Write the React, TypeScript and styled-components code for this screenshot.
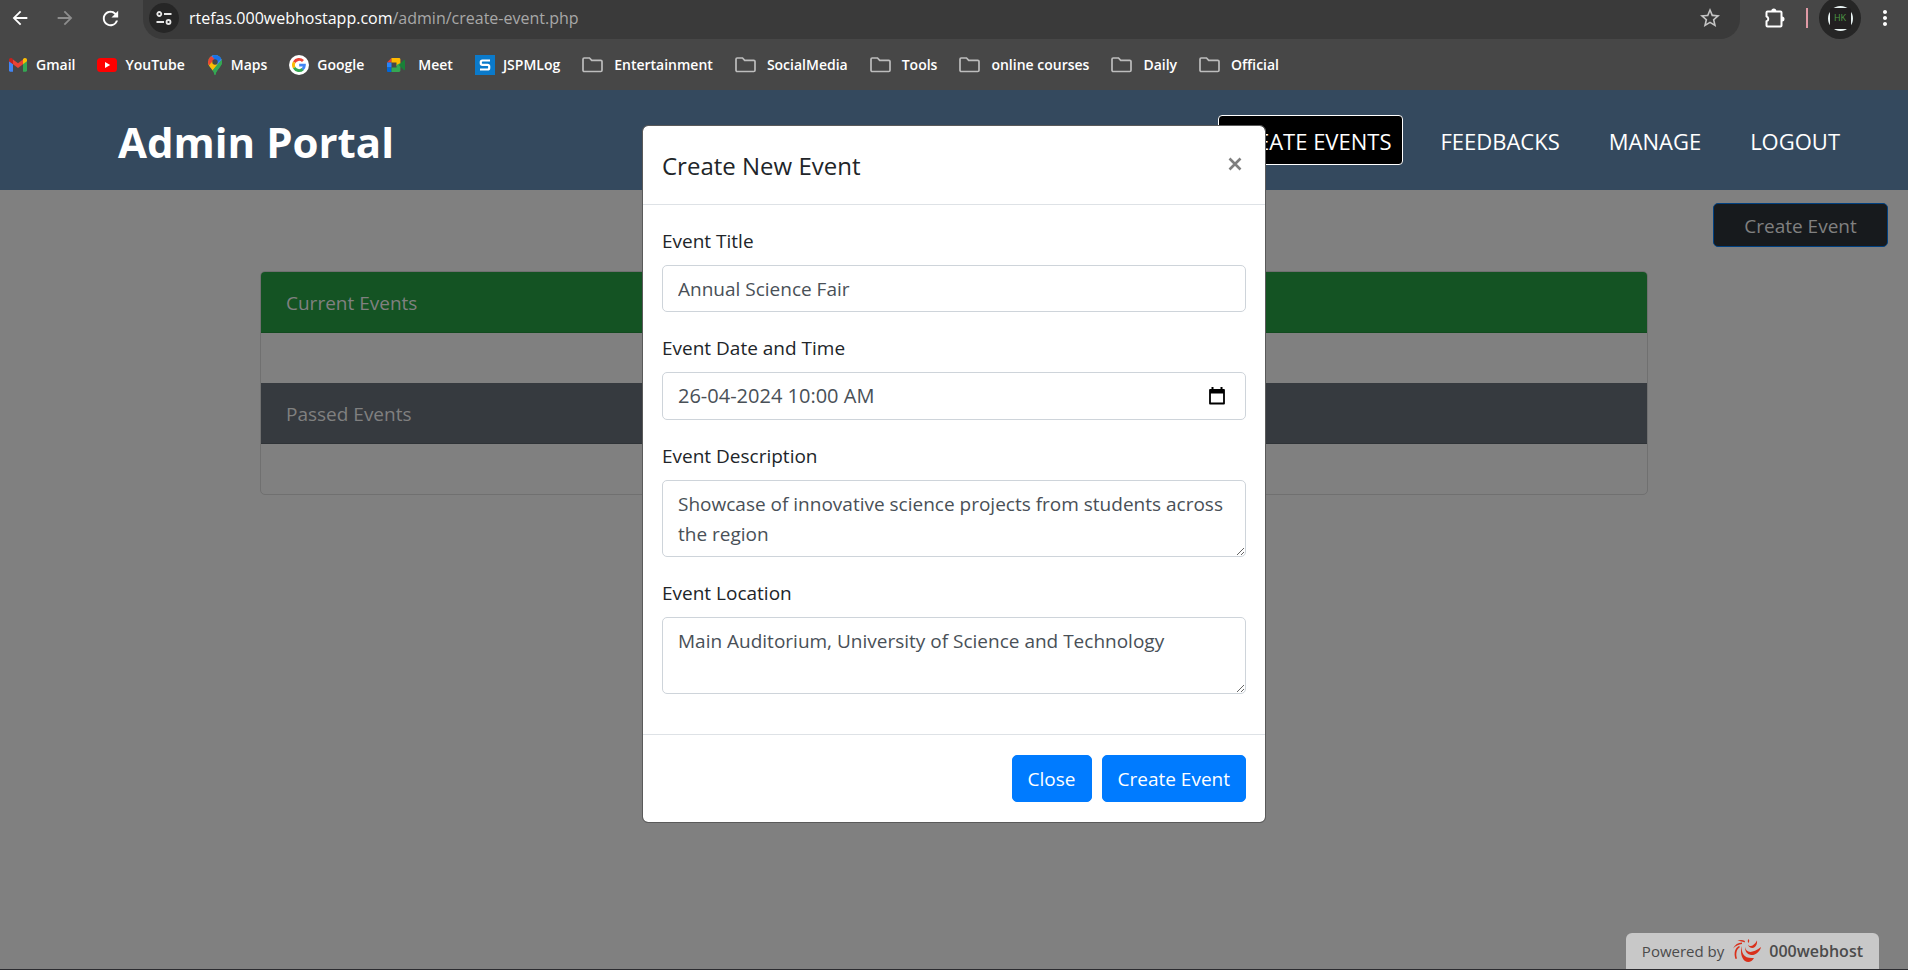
import React from 'react';
import styled, { createGlobalStyle, css } from 'styled-components';
import { MdArrowBack, MdArrowForward, MdRefresh, MdStarOutline, MdMoreVert } from 'react-icons/md';

const GlobalStyle = createGlobalStyle`
  *, *::before, *::after { box-sizing: border-box; }
  body {
    margin: 0;
    background: #808080;
    color: #212529;
    font-family: "Segoe UI", "Open Sans", "Noto Sans", sans-serif;
    font-size: 19px;
    line-height: 30px;
  }
  button, input, textarea { font: inherit; }
`;

const Screen = styled.div`
  display: flex;
  flex-direction: column;
  min-height: 100vh;
  overflow: hidden;
`;

/* ---------- Browser chrome ---------- */

const Chrome = styled.div`
  display: flex;
  flex-direction: column;
  height: 90px;
  background: #474747;
  color: #fff;
`;

const Toolbar = styled.div`
  display: flex;
  align-items: center;
  height: 39px;
`;

const NavTools = styled.div`
  display: flex;
  gap: 23px;
  width: 143px;
  padding: 0 0 3px 9px;
`;

const ToolButton = styled.button<{ $muted?: boolean }>`
  display: flex;
  padding: 0;
  border: 0;
  background: none;
  color: ${(p) => (p.$muted ? '#8d8d8d' : '#fff')};
`;

const Omnibox = styled.div`
  display: flex;
  flex: 1;
  align-items: center;
  height: 39px;
  padding: 0 18px 3px 6px;
  border-radius: 0 0 20px 20px;
  background: #3a3a3a;
`;

const SiteInfo = styled.button`
  display: flex;
  align-items: center;
  justify-content: center;
  width: 30px;
  height: 30px;
  padding: 0;
  border: 0;
  border-radius: 50%;
  background: #262626;
`;

const Address = styled.div`
  flex: 1;
  padding-left: 10px;
  font-size: 16px;
  color: #a8a8a8;
`;

const Host = styled.span`
  color: #fff;
`;

const RightTools = styled.div`
  display: flex;
  align-items: center;
  padding: 0 11px 3px 24px;
`;

const Divider = styled.span`
  width: 2px;
  height: 20px;
  margin: 0 11px 0 20px;
  background: #e09aa5;
`;

const Avatar = styled.button`
  display: flex;
  align-items: center;
  justify-content: center;
  width: 42px;
  height: 42px;
  margin-right: 12px;
  padding: 0;
  border: 0;
  border-radius: 50%;
  background: #262626;
`;

const AvatarRing = styled.span`
  display: flex;
  align-items: center;
  justify-content: center;
  width: 25px;
  height: 25px;
  border-radius: 50%;
  background: #e8f2f2;
`;

const AvatarFace = styled.span`
  display: flex;
  flex-shrink: 0;
  align-items: center;
  justify-content: center;
  width: 21px;
  height: 21px;
  border-radius: 2px;
  background: #211f20;
  color: #4f9a45;
  font-size: 9px;
  line-height: 12px;
`;

const Bookmarks = styled.nav`
  display: flex;
  align-items: center;
  gap: 22px;
  height: 51px;
  padding-left: 8px;
`;

const Bookmark = styled.a<{ $folder?: boolean }>`
  display: flex;
  align-items: center;
  gap: ${(p) => (p.$folder ? 11 : 8)}px;
  color: #fff;
  font-size: 14px;
  font-weight: 600;
  line-height: 20px;
  text-decoration: none;
  white-space: nowrap;
`;

/* ---------- Page ---------- */

const Page = styled.div`
  position: relative;
  display: flex;
  flex: 1;
  flex-direction: column;
  border-bottom: 1px solid #2b2b2f;
`;

const Header = styled.header`
  display: flex;
  align-items: center;
  justify-content: space-between;
  height: 100px;
  padding: 0 56px 0 118px;
  background: #34495e;
  color: #fff;
`;

const Brand = styled.h1`
  margin: 0;
  padding-top: 4px;
  font-size: 42px;
  font-weight: 700;
  line-height: 50px;
`;

const Menu = styled.nav`
  display: flex;
  gap: 25px;
`;

const MenuLink = styled.a<{ $active?: boolean }>`
  height: 50px;
  padding: 0 11px;
  border: 1px solid transparent;
  border-radius: 4px;
  color: #fff;
  font-size: 22px;
  line-height: 50px;
  text-decoration: none;
  ${(p) =>
    p.$active &&
    css`
      border-color: #fff;
      background: #000;
    `}
`;

const Actions = styled.div`
  display: flex;
  justify-content: flex-end;
  padding: 13px 20px 24px;
`;

const OpenButton = styled.button`
  width: 175px;
  height: 44px;
  padding: 1px 0 0;
  border: 1px solid #004080;
  border-radius: 5px;
  background: #171a1d;
  color: #808080;
`;

const Content = styled.main`
  width: 100%;
  max-width: 1428px;
  margin: 0 auto;
  padding: 0 20px;
`;

const Card = styled.section`
  overflow: hidden;
  border: 1px solid #707070;
  border-radius: 5px;
`;

const CardHeader = styled.h2<{ $tone: 'success' | 'secondary' }>`
  height: 61px;
  margin: 0;
  padding: 16px 25px 14px;
  border-bottom: 1px solid ${(p) => (p.$tone === 'success' ? '#124a1f' : '#2f3337')};
  background: ${(p) => (p.$tone === 'success' ? '#145323' : '#363a3f')};
  color: #808080;
  font-size: 19px;
  font-weight: 400;
`;

const CardBody = styled.div`
  height: 50px;
`;

/* ---------- Dialog ---------- */

const DialogLayer = styled.div`
  position: absolute;
  inset: 0;
  display: flex;
  align-items: flex-start;
  justify-content: center;
  padding: 35px 10px;
`;

const Dialog = styled.div`
  width: 100%;
  max-width: 624px;
  border: 1px solid #5a5a5a;
  border-radius: 6px;
  background: #fff;
  background-clip: padding-box;
`;

const DialogHeader = styled.div`
  display: flex;
  align-items: flex-start;
  justify-content: space-between;
  padding: 21px 21px 19px 19px;
  border-bottom: 1px solid #dee2e6;
`;

const DialogTitle = styled.h5`
  margin: 0;
  font-size: 24px;
  font-weight: 500;
  line-height: 38px;
`;

const CloseIcon = styled.button`
  display: flex;
  padding: 10px 2px;
  border: 0;
  background: none;
  color: #7f7f7f;
`;

const DialogBody = styled.form`
  display: flex;
  flex-direction: column;
  gap: 20px;
  padding: 20px 19px 40px;
`;

const Field = styled.div`
  display: flex;
  flex-direction: column;
  gap: 9px;
  padding-top: 1px;
`;

const Label = styled.label`
  color: #212529;
`;

const control = css`
  width: 100%;
  border: 1px solid #ced4da;
  border-radius: 5px;
  background: #fff;
  color: #495057;
`;

const TextInput = styled.input`
  ${control}
  height: 47px;
  padding: 1px 15px 0;
`;

const DateControl = styled.div`
  ${control}
  display: flex;
  align-items: center;
  height: 48px;
  padding: 0 20px 0 15px;
`;

const DateInput = styled.input`
  flex: 1;
  min-width: 0;
  padding: 0;
  border: 0;
  outline: 0;
  background: none;
  color: inherit;
  font-size: 20px;
`;

const PickerButton = styled.button`
  display: flex;
  padding: 0;
  border: 0;
  background: none;
`;

const TextArea = styled.textarea`
  ${control}
  display: block;
  height: 77px;
  padding: 8px 15px 7px;
  resize: vertical;
`;

const DialogFooter = styled.div`
  display: flex;
  justify-content: flex-end;
  gap: 10px;
  padding: 20px 19px;
  border-top: 1px solid #dee2e6;
`;

const PrimaryButton = styled.button`
  height: 47px;
  padding: 0 15px;
  border: 1px solid #007bff;
  border-radius: 5px;
  background: #007bff;
  color: #fff;
  font-weight: 500;
`;

/* ---------- Hosting badge ---------- */

const HostBadge = styled.a`
  position: absolute;
  right: 29px;
  bottom: 0;
  display: flex;
  align-items: center;
  gap: 9px;
  height: 36px;
  padding: 0 16px;
  border-radius: 6px 6px 0 0;
  background: #c8c8c8;
  color: #4b4b4b;
  font-size: 15px;
  line-height: 20px;
  text-decoration: none;
`;

const HostName = styled.span`
  margin-left: -2px;
  font-size: 16px;
  font-weight: 600;
`;

/* ---------- Icons ---------- */

const GmailIcon = () => (
  <svg width="20" height="20" viewBox="0 0 20 20" aria-hidden="true">
    <path d="M1 6v9.6c0 .7.5 1.2 1.2 1.2H5V8.9L1 6z" fill="#4285f4" />
    <path d="M15 8.9v7.9h2.8c.7 0 1.2-.5 1.2-1.2V6l-4 2.900z" fill="#34a853" />
    <path d="M15 4.6v4.600l4-3V4.800c0-1.600-1.800-2.400-3-1.500l-1 .8z" fill="#fbbc04" />
    <path d="M5 9.2V4.400l5 3.800 5-3.800v4.800L10 13 5 9.200z" fill="#ea4335" />
    <path d="M1 4.8v1.400l4 3V4.200L4 3.300C2.800 2.400 1 3.200 1 4.800z" fill="#c5221f" />
  </svg>
);

const YouTubeIcon = () => (
  <svg width="20" height="20" viewBox="0 0 20 20" aria-hidden="true">
    <rect x="0" y="3" width="20" height="14" rx="3.500" fill="#f00" />
    <path d="M8 7l5.200 3L8 13z" fill="#fff" />
  </svg>
);

const MapsIcon = () => (
  <svg width="16" height="22" viewBox="0 0 16 22" aria-hidden="true">
    <clipPath id="pin">
      <path d="M8 1a7 7 0 0 0-7 7c0 2.800 1.600 4.600 3.200 6.600C5.800 16.700 7 18.400 7.300 20.400c.2.900 1.200.9 1.400 0 .3-2 1.500-3.700 3.100-5.800C13.400 12.600 15 10.800 15 8a7 7 0 0 0-7-7z" />
    </clipPath>
    <g clipPath="url(#pin)">
      <rect width="16" height="22" fill="#34a853" />
      <path d="M0 22V8l4-2 4 2 7-3-9 11z" fill="#fbbc04" />
      <path d="M3 0h13v5l-6 6-4-5z" fill="#4285f4" />
      <path d="M5 0h8l2 4-5 5-3-3z" fill="#1a73e8" />
      <path d="M0 2l3-1 4.500 4L1.500 12 0 9z" fill="#ea4335" />
      <path d="M11 10l5-6v5l-8 11-2-4z" fill="#34a853" />
    </g>
    <circle cx="8" cy="8" r="2.700" fill="#474747" />
  </svg>
);

const GoogleIcon = () => (
  <svg width="20" height="20" viewBox="0 0 20 20" aria-hidden="true">
    <circle cx="10" cy="10" r="10" fill="#fff" />
    <g fill="none" strokeWidth="2.800">
      <path d="M5.200 7.200A5.600 5.600 0 0 1 14 6.100" stroke="#ea4335" />
      <path d="M5.200 12.800a5.600 5.600 0 0 1 0-5.600" stroke="#fbbc05" />
      <path d="M13.800 14.100a5.600 5.600 0 0 1-8.600-1.300" stroke="#34a853" />
      <path d="M10.200 10.200h5.200a5.600 5.600 0 0 1-1.800 4" stroke="#4285f4" />
    </g>
  </svg>
);

const MeetIcon = () => (
  <svg width="24" height="20" viewBox="0 0 24 20" aria-hidden="true">
    <path d="M1 7.500L5.500 3v4.500z" fill="#ea4335" />
    <path d="M1 7.500h4.500v5H1z" fill="#2684fc" />
    <path d="M1 12.500h4.500V17H2.300c-.8 0-1.300-.5-1.300-1.300z" fill="#0066da" />
    <path d="M5.500 3H13c.8 0 1.400.6 1.400 1.400v4.600L10.500 11V7.500h-5z" fill="#ffba00" />
    <path d="M5.500 12.500h5V10l3.900-2v7.600c0 .8-.6 1.400-1.400 1.400H5.500z" fill="#34a853" />
    <path d="M13 10l4.800-5c.6-.6 1.200-.2 1.200.5v9c0 .7-.6 1.100-1.200.5z" fill="#188038" />
  </svg>
);

const SIcon = () => (
  <svg width="20" height="20" viewBox="0 0 20 20" aria-hidden="true">
    <rect width="20" height="20" fill="#0a7acb" />
    <path
      d="M15 5.500H7.400c-1 0-1.600.6-1.600 1.500v1.300c0 1 .6 1.500 1.600 1.500h5.200c1 0 1.600.6 1.600 1.500v1.700c0 1-.6 1.500-1.600 1.500H5"
      fill="none"
      stroke="#fff"
      strokeWidth="2.200"
    />
  </svg>
);

const FolderIcon = () => (
  <svg width="21" height="20" viewBox="0 0 21 20" aria-hidden="true">
    <path
      d="M1 4.200C1 3.500 1.500 3 2.200 3h5.300l2.200 2.400h9.100c.7 0 1.200.5 1.200 1.200v8.700c0 .7-.5 1.200-1.200 1.200H2.200c-.7 0-1.200-.5-1.200-1.200z"
      fill="none"
      stroke="#bdbdbd"
      strokeWidth="1.700"
    />
  </svg>
);

const TuneIcon = () => (
  <svg width="16" height="16" viewBox="0 0 16 16" fill="none" stroke="#e8e8e8" strokeWidth="1.800" aria-hidden="true">
    <circle cx="3.300" cy="4" r="2" />
    <path d="M8 4h7.500M.5 12H8" />
    <circle cx="12.500" cy="12" r="2" />
  </svg>
);

const PuzzleIcon = () => (
  <svg width="22" height="22" viewBox="0 0 22 22" aria-hidden="true">
    <path
      d="M3.500 4.500h13c.6 0 1 .4 1 1v13c0 .6-.4 1-1 1h-13c-.6 0-1-.4-1-1v-4.200a2.500 2.500 0 0 0 0-4.800V5.500c0-.6.4-1 1-1z"
      fill="none"
      stroke="#fff"
      strokeWidth="2"
      strokeLinejoin="round"
    />
    <path d="M7.300 4a2.500 2.500 0 0 1 5 0zM18 9.500a2.500 2.500 0 0 1 0 5z" fill="#fff" />
  </svg>
);

const CrossIcon = () => (
  <svg width="14" height="14" viewBox="0 0 14 14" aria-hidden="true">
    <path d="M1.500 1.500l11 11m0-11l-11 11" stroke="currentColor" strokeWidth="2.600" />
  </svg>
);

const CalendarIcon = () => (
  <svg width="16" height="18" viewBox="0 0 16 18" aria-hidden="true">
    <path d="M1 3h14v13.500H1z" fill="none" stroke="#000" strokeWidth="1.800" strokeLinejoin="round" />
    <path d="M1 2.500h14v4H1zM2.500 0h2v3h-2zM11.500 0h2v3h-2z" fill="#000" />
  </svg>
);

const SwirlIcon = () => (
  <svg width="29" height="26" viewBox="0 0 29 26" fill="#d9301a" aria-hidden="true">
    <path d="M9 8C8 15 11 21 21 20c-2 4-6 5-9 3-4-3-5-10-3-15z" />
    <path d="M12 9c1 6 7 7 16 0-1 5-6 8.500-10 8-4.500-1-6-4-6-8z" />
    <path d="M15 6.500c2 3 6 1.500 9-4 .5 3.500-1.500 7.500-4.500 7.500-2.500 0-4-1.500-4.500-3.500z" />
    <path d="M15.500 1c1.200 1.200.8 3 0 4-.9-.8-1-2.700 0-4z" />
    <path d="M6 8C2 10 .5 15 2.500 21l1.500-.5C2.500 16 3.500 11 7 9zM9 4.500C5 4.500 2 6.500 0 10.500 2.500 8 5.500 6.500 9 6zM12 3C9 1.500 7 1.500 4.500 3c3 0 5 .5 7 1.500z" />
  </svg>
);

const BOOKMARKS: { name: string; icon?: React.ReactNode }[] = [
  { name: 'Gmail', icon: <GmailIcon /> },
  { name: 'YouTube', icon: <YouTubeIcon /> },
  { name: 'Maps', icon: <MapsIcon /> },
  { name: 'Google', icon: <GoogleIcon /> },
  { name: 'Meet', icon: <MeetIcon /> },
  { name: 'JSPMLog', icon: <SIcon /> },
  { name: 'Entertainment' },
  { name: 'SocialMedia' },
  { name: 'Tools' },
  { name: 'online courses' },
  { name: 'Daily' },
  { name: 'Official' },
];

const MENU = ['CREATE EVENTS', 'FEEDBACKS', 'MANAGE', 'LOGOUT'];

export default function App() {
  return (
    <Screen>
      <GlobalStyle />
      <Chrome>
        <Toolbar>
          <NavTools>
            <ToolButton aria-label="Back"><MdArrowBack size={22} /></ToolButton>
            <ToolButton aria-label="Forward" $muted><MdArrowForward size={22} /></ToolButton>
            <ToolButton aria-label="Reload"><MdRefresh size={23} /></ToolButton>
          </NavTools>
          <Omnibox>
            <SiteInfo aria-label="Site information"><TuneIcon /></SiteInfo>
            <Address><Host>rtefas.000webhostapp.com</Host>/admin/create-event.php</Address>
            <ToolButton aria-label="Bookmark this page" $muted><MdStarOutline size={24} color="#c4c4c4" /></ToolButton>
          </Omnibox>
          <RightTools>
            <ToolButton aria-label="Extensions"><PuzzleIcon /></ToolButton>
            <Divider />
            <Avatar aria-label="Profile"><AvatarRing><AvatarFace>HK</AvatarFace></AvatarRing></Avatar>
            <ToolButton aria-label="Browser menu"><MdMoreVert size={24} /></ToolButton>
          </RightTools>
        </Toolbar>
        <Bookmarks aria-label="Bookmarks">
          {BOOKMARKS.map((b) => (
            <Bookmark href="#" key={b.name} $folder={!b.icon}>{b.icon ?? <FolderIcon />}{b.name}</Bookmark>
          ))}
        </Bookmarks>
      </Chrome>

      <Page>
        <Header>
          <Brand>Admin Portal</Brand>
          <Menu>
            {MENU.map((item, i) => (
              <MenuLink href="#" key={item} $active={i === 0}>{item}</MenuLink>
            ))}
          </Menu>
        </Header>
        <Actions><OpenButton>Create Event</OpenButton></Actions>
        <Content>
          <Card>
            <CardHeader $tone="success">Current Events</CardHeader>
            <CardBody />
            <CardHeader $tone="secondary">Passed Events</CardHeader>
            <CardBody />
          </Card>
        </Content>

        <DialogLayer>
          <Dialog role="dialog" aria-labelledby="dialog-title">
            <DialogHeader>
              <DialogTitle id="dialog-title">Create New Event</DialogTitle>
              <CloseIcon aria-label="Close dialog"><CrossIcon /></CloseIcon>
            </DialogHeader>
            <DialogBody id="event-form">
              <Field>
                <Label htmlFor="title">Event Title</Label>
                <TextInput id="title" defaultValue="Annual Science Fair" />
              </Field>
              <Field>
                <Label htmlFor="date">Event Date and Time</Label>
                <DateControl>
                  <DateInput id="date" defaultValue="26-04-2024 10:00 AM" />
                  <PickerButton type="button" aria-label="Pick a date"><CalendarIcon /></PickerButton>
                </DateControl>
              </Field>
              <Field>
                <Label htmlFor="description">Event Description</Label>
                <TextArea
                  id="description"
                  defaultValue="Showcase of innovative science projects from students across the region"
                />
              </Field>
              <Field>
                <Label htmlFor="location">Event Location</Label>
                <TextArea id="location" defaultValue="Main Auditorium, University of Science and Technology" />
              </Field>
            </DialogBody>
            <DialogFooter>
              <PrimaryButton type="button">Close</PrimaryButton>
              <PrimaryButton type="submit" form="event-form">Create Event</PrimaryButton>
            </DialogFooter>
          </Dialog>
        </DialogLayer>

        <HostBadge href="#">
          Powered by <SwirlIcon /> <HostName>000webhost</HostName>
        </HostBadge>
      </Page>
    </Screen>
  );
}
